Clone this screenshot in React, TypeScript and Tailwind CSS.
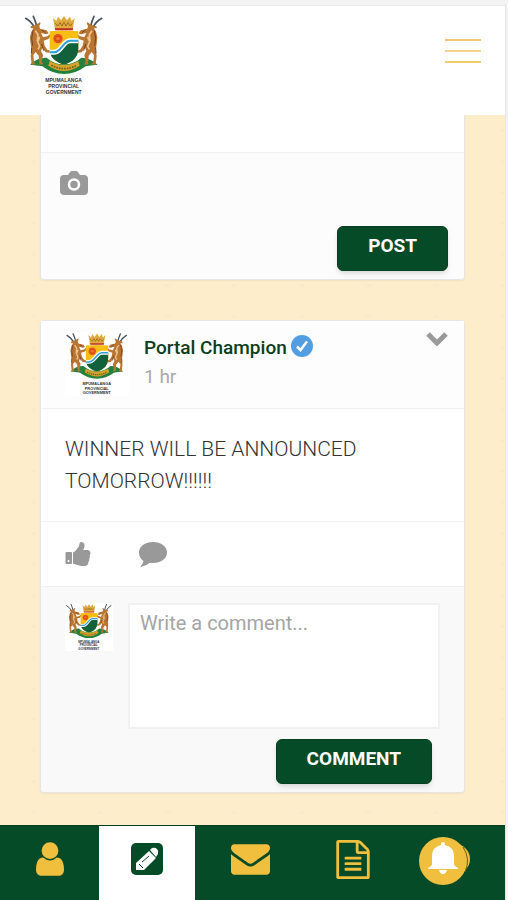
import type { ReactNode } from "react";

function Antelope() {
  return (
    <g>
      <path d="M102 80Q94 64 76 53M109 76Q105 60 99 47" fill="none" stroke="#46515b" strokeWidth="5" strokeLinecap="round" />
      <path
        d="M93 76l14-3 11-8 3 2-4 9 2 8 20 5 6 9-7 3-16-4 6 13 13-3 9-7 3 5-9 10-14 5 3 15 8 12 12 3v7l-17-2-10-14-4 10 6 12-4 20 5 8-12 1-1-10-1-17-9-11-7 9 2 21 6 7-13 1-3-26 3-17-3-19-2-20 4-17 6-10-9-1z"
        fill="#b97532"
      />
      <path d="M105 90l8 12-2 18 7 17-5 9M118 108l-4 12" fill="none" stroke="#efc48a" strokeWidth="5" />
      <path d="M98 90l-4 23 3 22M125 88l10 8M124 130l6 20M94 141l-1 17" fill="none" stroke="#74401f" strokeWidth="3" />
    </g>
  );
}

function Crest({ className }: { className?: string }) {
  return (
    <svg viewBox="68 40 246 246" className={className} role="img" aria-label="Mpumalanga Provincial Government">
      <rect x="68" y="40" width="246" height="246" fill="#fff" />
      <path d="M89 192q22-22 50-21 22 20 52 20t52-20q26 0 49 21-22 2-36 5-30 23-65 23t-65-23q-16-3-37-5z" fill="#23803d" />
      <Antelope />
      <g transform="translate(380 0) scale(-1 1)">
        <Antelope />
      </g>
      <path d="M148 92q42-5 86 0v50q0 38-43 50-43-12-43-50z" fill="#f8bd14" />
      <path d="M149 158h16q10 0 18-10l16-20q6-7 14-7h21v21q0 38-43 50-34-9-42-34z" fill="#12613d" />
      <path d="M148 155h12q10 0 18-9l15-17q8-9 16-9h25" fill="none" stroke="#fff" strokeWidth="15" />
      <path d="M148 155h12q10 0 18-9l15-17q8-9 16-9h25" fill="none" stroke="#2f9fd6" strokeWidth="6" />
      <circle cx="173" cy="114" r="14" fill="#e55320" />
      <circle cx="173" cy="114" r="7" fill="#f07c22" stroke="#c8321c" strokeWidth="2" />
      <path d="M158 52l10 9 5-13 9 11 9-13 9 13 9-11 5 13 9-9-6 33h-53z" fill="#e0aa3e" />
      <path d="M165 68l7 8 7-10 6 10 6-11 6 11 6-10 7 10 6-8" fill="none" stroke="#9d6a20" strokeWidth="3" />
      <path d="M163 83h56l-2 6h-52z" fill="#bd2a20" />
      <path d="M148 181q43 24 86 0l4 14q-47 32-94 0z" fill="#d3a32b" />
      <path d="M153 194q38 20 77 0" fill="none" stroke="#75601c" strokeWidth="5" strokeDasharray="5 3" />
      <g fill="#333" fontFamily="Liberation Sans, sans-serif" fontSize="15" fontWeight="700" textAnchor="middle">
        <text x="190" y="245">MPUMALANGA</text>
        <text x="190" y="262">PROVINCIAL</text>
        <text x="190" y="280">GOVERNMENT</text>
      </g>
    </svg>
  );
}

function CameraIcon() {
  return (
    <svg viewBox="0 0 28 24" className="h-6 w-7" aria-hidden="true">
      <path d="M8 4l2-3q1-1 2-1h4q1 0 2 1l2 3h4q4 0 4 4v12q0 4-4 4H4q-4 0-4-4V8q0-4 4-4z" fill="#999" />
      <circle cx="14" cy="13.500" r="5" fill="#999" stroke="#fff" strokeWidth="2.500" />
    </svg>
  );
}

function ThumbIcon() {
  return (
    <svg viewBox="64 128 1600 1536" className="h-6 w-[26px]" aria-hidden="true">
      <path
        fill="#999"
        d="M320 1344q0-26-19-45t-45-19q-27 0-45.500 19t-18.500 45q0 27 18.500 45.500t45.500 18.500q26 0 45-18.500t19-45.500zm160-512v640q0 26-19 45t-45 19h-288q-26 0-45-19t-19-45v-640q0-26 19-45t45-19h288q26 0 45 19t19 45zm1184 0q0 86-55 149 15 44 15 76 3 76-43 137 17 56 0 117-15 57-54 94 9 112-49 181-64 76-197 78h-129q-66 0-144-15.500t-121.500-29-120.500-39.500q-123-43-158-44-26-1-45-19.500t-19-44.500v-641q0-25 18-43.500t43-20.500q24-2 76-59t101-121q68-87 101-120 18-18 31-48t17.500-48.500 13.500-60.500q7-39 12.500-61t19.500-52 34-50q19-19 45-19 46 0 82.500 10.500t60 26 40 40.500 24 45 12 50 5 45 .5 39q0 38-9.500 76t-19 60-27.500 56q-3 6-10 18t-11 22-8 24h277q78 0 135 57t57 135z"
      />
    </svg>
  );
}

function CommentIcon() {
  return (
    <svg viewBox="0 0 28 25" className="h-[25px] w-7" aria-hidden="true">
      <path d="M14 0c8 0 14 4.500 14 10.500S22 21 14 21l-3-.2Q7 24 2 25l-.4-.6Q4 22 4.500 19 0 16 0 10.500C0 4.500 6 0 14 0z" fill="#999" />
    </svg>
  );
}

function VerifiedIcon() {
  return (
    <svg viewBox="0 0 22 22" className="size-[22px]" role="img" aria-label="Verified">
      <circle cx="11" cy="11" r="11" fill="#539ee3" />
      <path d="M6 11.500l3.500 3.500L16 6.500" fill="none" stroke="#fff" strokeWidth="2.500" />
    </svg>
  );
}

function UserIcon() {
  return (
    <svg viewBox="256 128 1280 1536" className="h-[34px] w-7" aria-hidden="true">
      <path
        fill="currentColor"
        d="M1536 1399q0 109-62.500 187t-150.500 78h-854q-88 0-150.500-78t-62.500-187q0-85 8.500-160.500t31.500-152 58.500-131 94-89 134.500-34.500q131 128 313 128t313-128q76 0 134.500 34.500t94 89 58.500 131 31.500 152 8.500 160.500zm-256-887q0 159-112.500 271.500t-271.500 112.500-271.500-112.500-112.500-271.500 112.500-271.500 271.500-112.500 271.500 112.500 112.500 271.500z"
      />
    </svg>
  );
}

function PencilIcon() {
  return (
    <svg viewBox="0 0 32 32" className="size-8" aria-hidden="true">
      <rect width="32" height="32" rx="5" fill="#064b27" />
      <path d="M5 20L18 8l7 7-12 12H5zM19 7l2-2q3-1 5 1t1 5l-2 3z" fill="#fff" />
      <path d="M11 19l7-6M8 21l4 4" fill="none" stroke="#064b27" strokeWidth="1" />
    </svg>
  );
}

function EnvelopeIcon() {
  return (
    <svg viewBox="0 256 1792 1408" className="h-[31px] w-[39px]" aria-hidden="true">
      <path
        fill="currentColor"
        d="M1792 710v794q0 66-47 113t-113 47h-1472q-66 0-113-47t-47-113v-794q44 49 101 87 362 246 497 345 57 42 92.500 65.500t94.500 48 110 24.500h2q51 0 110-24.500t94.500-48 92.500-65.500q170-123 498-345 57-39 100-87zm0-294q0 79-49 151t-122 123q-376 261-468 325-10 7-42.500 31t-54 38.500-52 32.500-57.500 27-50 9h-2q-23 0-50-9t-57.500-27-52-32.500-54-38.500-42.500-31q-91-64-262-182.500t-205-142.500q-62-42-117-115.500t-55-136.500q0-78 41.500-130t118.500-52h1472q65 0 112.500 47t47.500 113z"
      />
    </svg>
  );
}

function FileIcon() {
  return (
    <svg viewBox="128 0 1536 1792" className="h-[39px] w-[34px]" aria-hidden="true">
      <path
        fill="currentColor"
        d="M1596 380q28 28 48 76t20 88v1152q0 40-28 68t-68 28h-1344q-40 0-68-28t-28-68v-1600q0-40 28-68t68-28h896q40 0 88 20t76 48zm-444-244v376h376q-10-29-22-41l-313-313q-12-12-41-22zm384 1528v-1024h-416q-40 0-68-28t-28-68v-416h-768v1536h1280zm-1024-864q0-14 9-23t23-9h704q14 0 23 9t9 23v64q0 14-9 23t-23 9h-704q-14 0-23-9t-9-23v-64zm736 224q14 0 23 9t9 23v64q0 14-9 23t-23 9h-704q-14 0-23-9t-9-23v-64q0-14 9-23t23-9h704zm0 256q14 0 23 9t9 23v64q0 14-9 23t-23 9h-704q-14 0-23-9t-9-23v-64q0-14 9-23t23-9h704z"
      />
    </svg>
  );
}

function BellIcon() {
  return (
    <svg viewBox="0 -4 52 52" className="size-[52px]" aria-hidden="true">
      <circle cx="36" cy="22" r="15" fill="currentColor" />
      <circle cx="24" cy="24" r="24" fill="currentColor" />
      <path d="M44 10q8 12 2 25" fill="none" stroke="#685f22" strokeWidth="1" />
      <path d="M22 8q0-3 2-3t2 3q9 2 9 11v8q0 2 4 4v1H9v-1q4-2 4-4v-8q0-9 9-11zM20 33h8q-1 4-4 4t-4-4z" fill="#fff" />
    </svg>
  );
}

function ActionButton({ children }: { children: ReactNode }) {
  return (
    <button
      type="button"
      className="h-[45px] rounded-md border border-[#05401f] bg-[#064b27] px-[30px] pb-1 text-[19px] font-bold text-white shadow-md"
    >
      {children}
    </button>
  );
}

const navItems = [
  { label: "Profile", icon: <UserIcon />, active: false },
  { label: "Posts", icon: <PencilIcon />, active: true },
  { label: "Messages", icon: <EnvelopeIcon />, active: false },
  { label: "Documents", icon: <FileIcon />, active: false },
  { label: "Notifications", icon: <BellIcon />, active: false },
];

export default function App() {
  return (
    <div className="min-h-screen bg-[#f3f3f3] pt-[5px] pr-[2px] font-[Roboto,sans-serif]">
      <div className="flex min-h-[895px] flex-col border-r border-[#e5e5e5] bg-[#fdedcb]">
        <header className="flex h-[110px] items-start justify-between border-t border-[#ebebeb] bg-white pr-6 pl-[23px]">
          <Crest className="mt-2 size-[82px]" />
          <button type="button" aria-label="Open menu" className="mt-[33px] flex w-9 flex-col gap-[9px]">
            <span className="h-[2px] w-full bg-[#eecb70]" />
            <span className="h-[2px] w-full bg-[#f4d391]" />
            <span className="h-[2px] w-full bg-[#eecb70]" />
          </button>
        </header>

        <main className="flex flex-1 flex-col gap-10 bg-[radial-gradient(ellipse_at_center,#f9e9c8_1px,transparent_4px)] bg-[size:67px_31px] px-10 pb-8">
          {/* New post */}
          <section className="rounded-b border border-t-0 border-[#e7e5e2] bg-[#fcfcfc] shadow-xs">
            <div className="h-[38px] border-b border-[#f0f0f0] bg-white" />
            <div className="flex h-[126px] flex-col items-start justify-between pt-[18px] pr-4 pb-2 pl-[19px]">
              <button type="button" aria-label="Add photo">
                <CameraIcon />
              </button>
              <div className="self-end">
                <ActionButton>POST</ActionButton>
              </div>
            </div>
          </section>

          <article className="rounded border border-[#e7e5e2] bg-white shadow-xs">
            <header className="flex h-[88px] items-start border-b border-[#f0f0f0] bg-[#fdfdfd] pt-[11px] pr-4 pl-6">
              <Crest className="size-16" />
              <div className="ml-[15px] flex-1">
                <div className="flex h-7 items-center gap-1">
                  <h2 className="pt-[5px] text-[19px] font-medium text-[#0a3d20]">Portal Champion</h2>
                  <VerifiedIcon />
                </div>
                <p className="pt-[3px] text-[19px] text-[#aaa]">1 hr</p>
              </div>
              <button type="button" aria-label="Post options">
                <svg viewBox="0 0 22 14" className="h-[14px] w-[22px]" aria-hidden="true">
                  <path d="M2 2l9 9 9-9" fill="none" stroke="#999" strokeWidth="5" />
                </svg>
              </button>
            </header>

            <p className="border-b border-[#f0f0f0] px-6 py-6 text-[21px] leading-8 font-light text-[#333]">
              WINNER WILL BE ANNOUNCED TOMORROW!!!!!!
            </p>

            <div className="flex h-[65px] items-center gap-12 border-b border-[#f0f0f0] px-6">
              <button type="button" aria-label="Like">
                <ThumbIcon />
              </button>
              <button type="button" aria-label="Comment">
                <CommentIcon />
              </button>
            </div>

            <form className="flex flex-col gap-[10px] rounded-b bg-[#f9f9f9] pt-4 pr-6 pb-2 pl-6">
              <div className="flex items-start gap-[15px]">
                <Crest className="size-12" />
                <textarea
                  aria-label="Write a comment"
                  placeholder="Write a comment..."
                  className="h-[126px] min-w-0 flex-1 resize-none border-2 border-[#f1f1f1] bg-white px-[10px] py-1 text-xl placeholder:text-[#a5a5a5]"
                />
              </div>
              <div className="mr-2 self-end">
                <ActionButton>COMMENT</ActionButton>
              </div>
            </form>
          </article>
        </main>

        <nav className="grid h-[75px] grid-cols-[99fr_96fr_110fr_96fr_88fr] border-t border-[#043d1e] bg-[#064b27] pr-4 text-[#f0bf3e]">
          {navItems.map((item) => (
            <a
              key={item.label}
              href="#"
              aria-label={item.label}
              className={item.active ? "flex items-center justify-center bg-white pb-2" : "flex items-center justify-center pb-2"}
            >
              {item.icon}
            </a>
          ))}
        </nav>
      </div>
    </div>
  );
}
